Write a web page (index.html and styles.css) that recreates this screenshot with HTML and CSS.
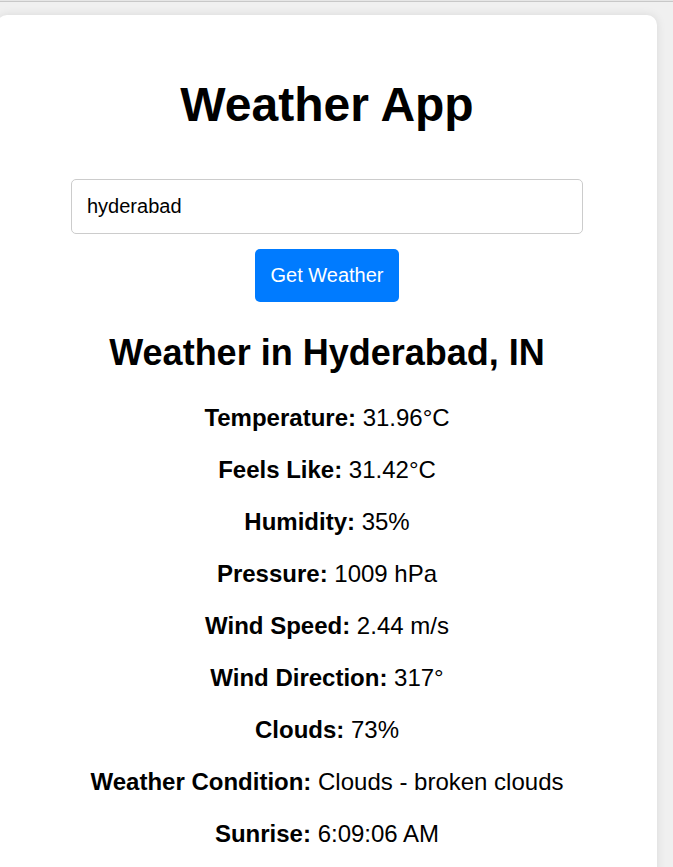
FILE: index.html
```html
<!DOCTYPE html>
<html lang="en">
<head>
<meta charset="UTF-8">
<title>Weather App</title>
<link rel="stylesheet" href="styles.css">
</head>
<body>
<div class="topline"></div>
<div class="page">
  <div class="card">
    <h1 class="title">Weather App</h1>
    <input class="city" type="text" value="hyderabad">
    <button class="btn">Get Weather</button>
    <div class="result">
      <h2 class="place">Weather in Hyderabad, IN</h2>
      <p class="row"><strong>Temperature:</strong> 31.96°C</p>
      <p class="row"><strong>Feels Like:</strong> 31.42°C</p>
      <p class="row"><strong>Humidity:</strong> 35%</p>
      <p class="row"><strong>Pressure:</strong> 1009 hPa</p>
      <p class="row"><strong>Wind Speed:</strong> 2.44 m/s</p>
      <p class="row"><strong>Wind Direction:</strong> 317°</p>
      <p class="row"><strong>Clouds:</strong> 73%</p>
      <p class="row"><strong>Weather Condition:</strong> Clouds - broken clouds</p>
      <p class="row"><strong>Sunrise:</strong> 6:09:06 AM</p>
    </div>
  </div>
</div>
</body>
</html>
```
FILE: styles.css
```css
html, body {
  margin: 0;
  padding: 0;
}
body {
  background: #f0f0f0;
  font-family: "Liberation Sans", Arial, sans-serif;
  font-size: 24px;
  color: #000;
  overflow: hidden;
}
.topline {
  height: 1px;
  background: #e6e6e6;
  border-bottom: 1px solid #c8c8c8;
}
.page {
  padding-top: 13px;
}
.card {
  width: 600px;
  margin-left: -3px;
  padding: 30px;
  background: #fff;
  border-radius: 10px;
  box-shadow: 0 0 10px rgba(0, 0, 0, 0.1);
  text-align: center;
}
.title {
  font-size: 48px;
  margin: 32px 0 47px;
}
.city {
  display: block;
  width: 80%;
  margin: 0 auto 15px;
  padding: 15px;
  font-family: inherit;
  font-size: 20px;
  border: 1px solid #ccc;
  border-radius: 5px;
  color: #000;
  outline: none;
}
.btn {
  display: block;
  margin: 0 auto;
  padding: 15px 15px;
  font-family: inherit;
  font-size: 20px;
  background: #007bff;
  color: #fff;
  border: none;
  border-radius: 5px;
}
.place {
  font-size: 36px;
  margin: 30px 0;
}
.row {
  margin: 24px 0;
}
```
